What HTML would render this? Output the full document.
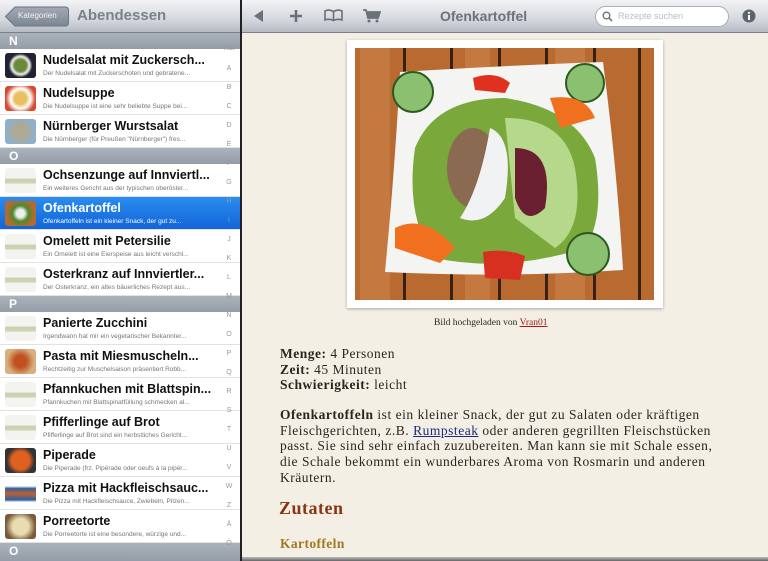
<!DOCTYPE html>
<html><head><meta charset="utf-8"><style>
*{margin:0;padding:0;box-sizing:border-box}
body{width:768px;height:561px;overflow:hidden;background:#f4efe4;font-family:"Liberation Sans",sans-serif;position:relative}
#left{position:absolute;left:0;top:0;width:240px;height:561px;background:#fff;overflow:hidden}
#divider{position:absolute;left:240px;top:0;width:2px;height:561px;background:#222}
.bar{background:linear-gradient(#f2f3f5,#d5d8de 60%,#b6bbc4);border-bottom:1px solid #7a808a}
#lh{position:absolute;left:0;top:0;width:240px;height:33px}
.back{position:absolute;left:5px;top:6px;width:64px;height:21px}
.back span{position:absolute;left:13px;top:5px;color:#f3f4f6;font-size:8px}
.ltitle{position:absolute;left:77px;top:7px;font-size:15px;font-weight:bold;color:#7a818b}
.sec{position:absolute;left:0;width:240px;height:16px;background:linear-gradient(#a6aeb8,#8f98a3);color:#fff;font-weight:bold;font-size:12px;line-height:16px;padding-left:9px;opacity:.95}
.row{position:absolute;left:0;width:240px;height:33px;border-bottom:1px solid #e2e2e2;background:#fff}
.row .t{position:absolute;left:43px;top:4px;font-size:12.5px;font-weight:bold;color:#111;white-space:nowrap}
.row .s{position:absolute;left:43px;top:21px;font-size:6.5px;color:#777;white-space:nowrap}
.row .th{position:absolute;left:5px;top:4px;width:31px;height:25px;border-radius:3px}
.pl{background:linear-gradient(#f3f3f0 40%,#c9cfb0 45%,#cfd5b9 60%,#f3f3f0 65%)}
.sel{background:linear-gradient(#2a8cf0,#1265d8)}
.sel .t,.sel .s{color:#fff}
.idx{position:absolute;left:222px;width:14px;text-align:center;font-size:7px;color:#999}
#rh{position:absolute;left:242px;top:0;width:526px;height:33px}
.ic{position:absolute;top:6px;color:#6b717b}
.rtitle{position:absolute;top:8px;font-size:14px;font-weight:bold;color:#6b717b}
.search{position:absolute;top:6px;width:134px;height:21px;background:#fff;border-radius:11px;border:1px solid #a9aeb6;font-size:9px;color:#b9bcc2;line-height:19px;padding-left:22px}
#frame{position:absolute;left:347px;top:40px;width:316px;height:268px;background:#fff;box-shadow:0 1px 3px rgba(0,0,0,.3)}
.ser{font-family:"Liberation Serif",serif;color:#2a2520;position:absolute;white-space:nowrap}
</style></head><body>
<div id="left">
<div id="lh" class="bar"><div class="back"><svg width="64" height="21"><defs><linearGradient id="bg" x1="0" y1="0" x2="0" y2="1"><stop offset="0" stop-color="#a3aab5"/><stop offset="1" stop-color="#7c8593"/></linearGradient></defs><path d="M0.5 10.5L10 1H60Q63.5 1 63.5 4.5V16.5Q63.5 20 60 20H10Z" fill="url(#bg)" stroke="#6c7480"/></svg><span>Kategorien</span></div><div class="ltitle">Abendessen</div></div>
<div class="sec" style="top:33px">N</div>
<div class="row" style="top:49px"><div class="th" style="background:radial-gradient(circle,#6a8a3a 30%,#eee 45%,#223 60%)"></div><div class="t">Nudelsalat mit Zuckersch...</div><div class="s">Der Nudelsalat mit Zuckerschoten und gebratene...</div></div>
<div class="row" style="top:82px"><div class="th" style="background:radial-gradient(circle,#e9c060 30%,#fff 50%,#d84a30 75%)"></div><div class="t">Nudelsuppe</div><div class="s">Die Nudelsuppe ist eine sehr beliebte Suppe bei...</div></div>
<div class="row" style="top:115px"><div class="th" style="background:radial-gradient(circle,#b0a890 30%,#8fb0c8 70%)"></div><div class="t">Nürnberger Wurstsalat</div><div class="s">Die Nürnberger (für Preußen "Nürnberger") fres...</div></div>
<div class="sec" style="top:148px">O</div>
<div class="row" style="top:164px"><div class="th pl"></div><div class="t">Ochsenzunge auf Innviertl...</div><div class="s">Ein weiteres Gericht aus der typischen oberöster...</div></div>
<div class="row sel" style="top:197px"><div class="th" style="background:radial-gradient(circle,#eee 20%,#4a8a30 40%,#b66a30 70%)"></div><div class="t">Ofenkartoffel</div><div class="s">Ofenkartoffeln ist ein kleiner Snack, der gut zu...</div></div>
<div class="row" style="top:230px"><div class="th pl"></div><div class="t">Omelett mit Petersilie</div><div class="s">Ein Omelett ist eine Eierspeise aus leicht verschl...</div></div>
<div class="row" style="top:263px"><div class="th pl"></div><div class="t">Osterkranz auf Innviertler...</div><div class="s">Der Osterkranz, ein altes bäuerliches Rezept aus...</div></div>
<div class="sec" style="top:296px">P</div>
<div class="row" style="top:312px"><div class="th pl"></div><div class="t">Panierte Zucchini</div><div class="s">Irgendwann hat mir ein vegetarischer Bekannter...</div></div>
<div class="row" style="top:345px"><div class="th" style="background:radial-gradient(circle,#c05020 30%,#d8b080 70%)"></div><div class="t">Pasta mit Miesmuscheln...</div><div class="s">Rechtzeitig zur Muschelsaison präsentiert Robb...</div></div>
<div class="row" style="top:378px"><div class="th pl"></div><div class="t">Pfannkuchen mit Blattspin...</div><div class="s">Pfannkuchen mit Blattspinatfüllung schmecken al...</div></div>
<div class="row" style="top:411px"><div class="th pl"></div><div class="t">Pfifferlinge auf Brot</div><div class="s">Pfifferlinge auf Brot sind ein herbstliches Gericht...</div></div>
<div class="row" style="top:444px"><div class="th" style="background:radial-gradient(circle,#e06020 45%,#333 70%)"></div><div class="t">Piperade</div><div class="s">Die Piperade (frz. Pipérade oder oeufs à la pipér...</div></div>
<div class="row" style="top:477px"><div class="th" style="background:linear-gradient(#fff 20%,#3060a0 30%,#c06030 50%,#3060a0 75%,#fff 85%)"></div><div class="t">Pizza mit Hackfleischsauc...</div><div class="s">Die Pizza mit Hackfleischsauce, Zwiebeln, Pilzen...</div></div>
<div class="row" style="top:510px"><div class="th" style="background:radial-gradient(circle,#e8dcb0 40%,#7a5a3a 75%)"></div><div class="t">Porreetorte</div><div class="s">Die Porreetorte ist eine besondere, würzige und...</div></div>
<div class="sec" style="top:543px;height:18px">O</div>
<div class="idx" style="top:45px">Kat</div>
<div class="idx" style="top:65px">A</div><div class="idx" style="top:84px">B</div><div class="idx" style="top:103px">C</div><div class="idx" style="top:122px">D</div><div class="idx" style="top:141px">E</div><div class="idx" style="top:160px">F</div><div class="idx" style="top:179px">G</div><div class="idx" style="top:198px">H</div><div class="idx" style="top:217px">I</div><div class="idx" style="top:236px">J</div><div class="idx" style="top:255px">K</div><div class="idx" style="top:274px">L</div><div class="idx" style="top:293px">M</div><div class="idx" style="top:312px">N</div><div class="idx" style="top:331px">O</div><div class="idx" style="top:350px">P</div><div class="idx" style="top:369px">Q</div><div class="idx" style="top:388px">R</div><div class="idx" style="top:407px">S</div><div class="idx" style="top:426px">T</div><div class="idx" style="top:445px">U</div><div class="idx" style="top:464px">V</div><div class="idx" style="top:483px">W</div><div class="idx" style="top:502px">Z</div><div class="idx" style="top:521px">Ä</div><div class="idx" style="top:540px">Ö</div>
</div>
<div id="divider"></div>
<div id="rh" class="bar">
<svg class="ic" style="left:10px;top:9px" width="12" height="14"><path d="M2 7 L11 1 L11 13Z" fill="#6b717b"/></svg>
<svg class="ic" style="left:47px;top:9px" width="14" height="14"><path d="M7 1V13M1 7H13" stroke="#6b717b" stroke-width="2.6"/></svg>
<svg class="ic" style="left:82px;top:9px" width="19" height="13"><path d="M1 2Q5 0 9.5 2.5Q14 0 18 2V11Q14 9.5 9.5 11.5Q5 9.5 1 11Z M9.5 2.5V11.5" stroke="#6b717b" stroke-width="1.6" fill="none"/></svg>
<svg class="ic" style="left:120px;top:9px" width="19" height="14"><path d="M1 1H4L6 9H16L18 3H5" stroke="#6b717b" stroke-width="1.8" fill="#6b717b"/><circle cx="7" cy="12" r="1.5" fill="#6b717b"/><circle cx="15" cy="12" r="1.5" fill="#6b717b"/></svg>
<div class="rtitle" style="left:198px">Ofenkartoffel</div>
<div class="search" style="left:353px"><svg style="position:absolute;left:6px;top:4px" width="11" height="11"><circle cx="4.5" cy="4.5" r="3.3" stroke="#777" stroke-width="1.4" fill="none"/><path d="M7 7L10 10" stroke="#777" stroke-width="1.6"/></svg>Rezepte suchen</div>
<svg class="ic" style="left:500px;top:9px" width="14" height="14"><circle cx="7" cy="7" r="6.5" fill="#5d636c"/><rect x="6" y="6" width="2" height="5" fill="#fff"/><circle cx="7" cy="3.8" r="1.1" fill="#fff"/></svg>
</div>
<div id="frame">
<svg style="position:absolute;left:8px;top:8px" width="299" height="252" viewBox="0 0 299 252">
<rect width="299" height="252" fill="#b86a30"/>
<g fill="#3a2010"><rect x="48" y="0" width="3" height="252"/><rect x="95" y="0" width="3" height="252"/><rect x="143" y="0" width="3" height="252"/><rect x="190" y="0" width="3" height="252"/><rect x="238" y="0" width="3" height="252"/><rect x="283" y="0" width="3" height="252"/></g>
<g fill="#d08850" opacity=".5"><rect x="5" y="0" width="30" height="252"/><rect x="110" y="0" width="25" height="252"/><rect x="200" y="0" width="30" height="252"/></g>
<path d="M45 24Q140 18 248 14Q262 120 268 222Q150 230 30 224Q40 120 45 24Z" fill="#f4f4f2"/>
<path d="M60 100Q80 50 150 50Q220 60 240 110Q250 170 230 200Q150 225 80 210Q50 170 60 100Z" fill="#7aa83a"/>
<path d="M150 70Q210 70 220 120Q230 180 200 200L160 170Z" fill="#b5d88a"/>
<ellipse cx="118" cy="120" rx="26" ry="40" fill="#8a6a50"/>
<path d="M135 80Q160 90 150 150Q130 180 105 170Q125 140 135 80Z" fill="#f0f2f4"/>
<path d="M160 100Q200 100 190 160Q170 180 160 150Z" fill="#6a2030"/>
<circle cx="58" cy="44" r="20" fill="#8ac070" stroke="#2a5a20" stroke-width="2"/>
<circle cx="230" cy="35" r="19" fill="#8ac070" stroke="#2a5a20" stroke-width="2"/>
<circle cx="233" cy="206" r="21" fill="#8ac070" stroke="#2a5a20" stroke-width="2"/>
<path d="M118 30Q140 22 155 35L150 45L120 42Z" fill="#e03020"/>
<path d="M128 204Q150 200 170 208L165 232L130 230Z" fill="#d83020"/>
<path d="M195 50Q230 45 240 70L205 80Z" fill="#f07020"/>
<path d="M40 180Q70 165 100 200L85 215L40 200Z" fill="#f07020"/>
</svg>
</div>
<div class="ser" style="left:434px;top:318px;font-size:9.5px">Bild hochgeladen von <span style="color:#a01818;text-decoration:underline">Vran01</span></div>
<div class="ser" style="left:280px;top:346px;font-size:13.5px;line-height:15.6px;letter-spacing:.5px"><b>Menge:</b> 4 Personen<br><b>Zeit:</b> 45 Minuten<br><b>Schwierigkeit:</b> leicht</div>
<div class="ser" style="left:280px;top:407px;font-size:13.5px;line-height:15.7px;letter-spacing:.52px"><b>Ofenkartoffeln</b> ist ein kleiner Snack, der gut zu Salaten oder kräftigen<br>Fleischgerichten, z.B. <span style="color:#1a2a80;text-decoration:underline">Rumpsteak</span> oder anderen gegrillten Fleischstücken<br>passt. Sie sind sehr einfach zuzubereiten. Man kann sie mit Schale essen,<br>die Schale bekommt ein wunderbares Aroma von Rosmarin und anderen<br>Kräutern.</div>
<div class="ser" style="left:279px;top:498px;font-size:18px;font-weight:bold;color:#8a3412;letter-spacing:.5px">Zutaten</div>
<div class="ser" style="left:280px;top:536px;font-size:13.5px;font-weight:bold;color:#a07820;letter-spacing:.4px">Kartoffeln</div>
<div style="position:absolute;left:242px;top:557px;width:526px;height:4px;background:linear-gradient(#bbb,#666)"></div>
</body></html>
